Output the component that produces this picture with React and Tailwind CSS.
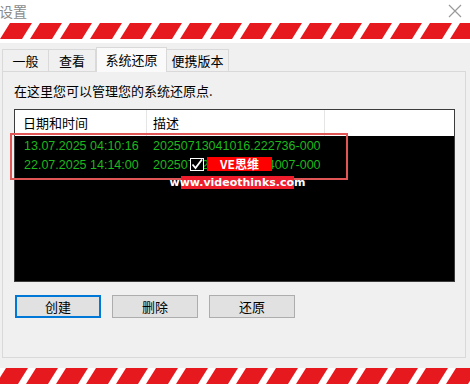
import React from 'react';

const cjk = { fontFamily: '"Noto Sans CJK SC", "Noto Sans", sans-serif' };

function Stripes({ offset = 0 }) {
  const items = Array.from({ length: 18 }, (_, i) => i * 30 + offset);
  return (
    <svg width="470" height="16" viewBox="0 0 470 16" className="block">
      {items.map((x) => (
        <polygon key={x} points={`${x + 10},0 ${x + 32},0 ${x + 22},16 ${x},16`} fill="#e5191e" />
      ))}
    </svg>
  );
}

const rows = [
  ['13.07.2025 04:10:16', '20250713041016.222736-000'],
  ['22.07.2025 14:14:00', '20250722141400.554007-000'],
];

export default function App() {
  return (
    <div className="w-[470px] h-[384px] bg-[#f0f0f0] overflow-hidden flex flex-col relative" style={cjk}>
      <div className="h-[22px] bg-white flex items-center justify-between pr-[8px]">
        <span className="text-[14px] text-[#8a8a8a] leading-none -ml-[1px]">设置</span>
        <svg width="14" height="14" viewBox="0 0 14 14">
          <path d="M1 1 L13 13 M13 1 L1 13" stroke="#9a9a9a" strokeWidth="1.2" />
        </svg>
      </div>
      <div className="bg-white pt-[1px] pb-[4px]">
        <Stripes offset={0} />
      </div>

      <div className="flex items-end px-[2px] h-[25px] mt-[3px] text-[13px] text-black leading-none">
        <div className="h-[22px] w-[47px] border border-[#d9d9d9] border-b-0 bg-[#f0f0f0] flex items-center justify-center">一般</div>
        <div className="h-[22px] w-[47px] border border-[#d9d9d9] border-b-0 border-l-0 bg-[#f0f0f0] flex items-center justify-center">查看</div>
        <div className="h-[25px] w-[71px] border border-[#d9d9d9] border-b-0 bg-[#fafafa] flex items-center justify-center -mb-[1px] relative z-10">系统还原</div>
        <div className="h-[22px] w-[62px] border border-[#d9d9d9] border-b-0 border-l-0 bg-[#f0f0f0] flex items-center justify-center">便携版本</div>
      </div>

      <div className="mx-[2px] w-[464px] h-[290px] border border-[#d9d9d9] bg-[#f0f0f0] px-[11px] pt-[12px] relative">
        <div className="text-[13px] text-black leading-none h-[14px]">在这里您可以管理您的系统还原点.</div>
        <div className="mt-[11px] w-[441px] h-[173px] border border-[#3c3c3c] bg-black flex flex-col">
          <div className="h-[26px] bg-white flex text-[13px] text-black leading-none items-center">
            <div className="w-[132px] h-full flex items-center pl-[8px] border-r border-[#e5e5e5]">日期和时间</div>
            <div className="w-[178px] h-full flex items-center pl-[6px] border-r border-[#e5e5e5]">描述</div>
            <div className="flex-1" />
          </div>
          <div className="pt-[1px] text-[12.5px] text-[#1cb81c] leading-none" style={{ fontFamily: '"Liberation Sans", sans-serif' }}>
            {rows.map(([d, s]) => (
              <div key={d} className="h-[19px] flex items-center">
                <div className="w-[132px] pl-[9px]">{d}</div>
                <div className="pl-[6px]">{s}</div>
              </div>
            ))}
          </div>
        </div>

        <div className="flex gap-[11px] mt-[13px] ml-[1px] text-[13px] text-black leading-none">
          <button className="w-[86px] h-[23px] bg-[#e1e1e1] border-2 border-[#0078d7] flex items-center justify-center">创建</button>
          <button className="w-[86px] h-[23px] bg-[#e1e1e1] border border-[#adadad] flex items-center justify-center">删除</button>
          <button className="w-[86px] h-[23px] bg-[#e1e1e1] border border-[#adadad] flex items-center justify-center">还原</button>
        </div>

        <div className="absolute left-[7px] top-[61px] w-[338px] h-[47px] border-2 border-[#e05656]" />
        <div className="absolute left-[187px] top-[86px] w-[14px] h-[13px] border border-white bg-black flex items-center justify-center">
          <svg width="12" height="11" viewBox="0 0 12 11">
            <path d="M1.5 5.5 L4.5 9 L11 0.5" stroke="white" strokeWidth="1.8" fill="none" />
          </svg>
        </div>
        <div className="absolute left-[204px] top-[85px] w-[65px] h-[14px] bg-[#ff0000] text-white text-[12px] font-bold leading-none flex items-center justify-center">VE思维</div>
        <div className="absolute left-[178px] top-[104px] w-[113px] h-[13px] bg-[#ef1c2c] text-white text-[11px] font-bold leading-none flex items-center justify-center" style={{ fontFamily: '"DejaVu Sans", sans-serif' }}>www.videothinks.com</div>
      </div>

      <div className="bg-white mt-[10px] h-[16px]">
        <Stripes offset={-4} />
      </div>
    </div>
  );
}
